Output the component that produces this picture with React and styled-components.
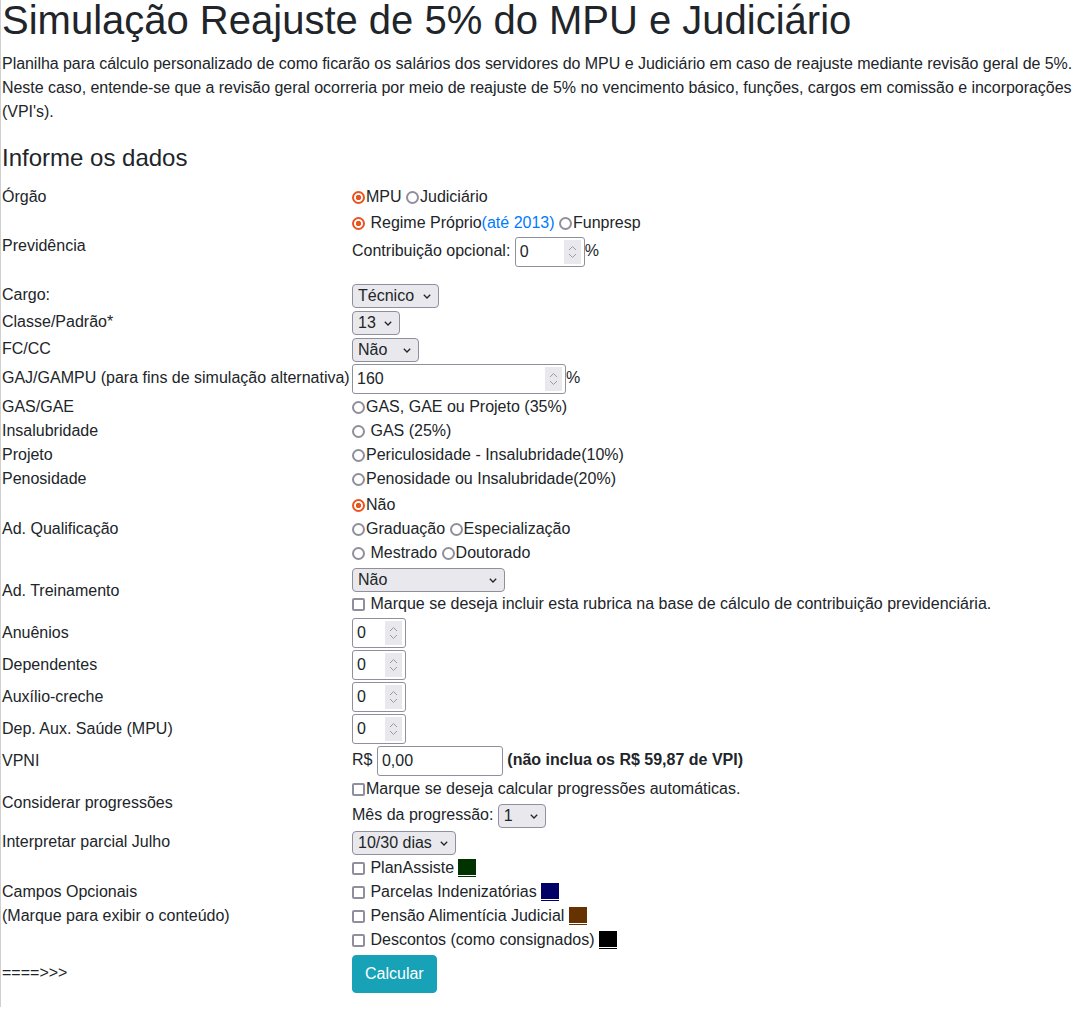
import React from 'react';
import styled, { createGlobalStyle } from 'styled-components';

const GlobalStyle = createGlobalStyle`
    *, *::before, *::after {
        box-sizing: border-box;
    }
    body {
        margin: 0;
        background: #fff;
    }
`;

const Page = styled.div`
    min-height: 100vh;
    border-left: 1px solid #d0d0d0;
    padding-left: 1px;
    font-family: 'Liberation Sans', Arial, sans-serif;
    font-size: 16px;
    line-height: 1.5;
    color: #212529;
`;

const Title = styled.h1`
    margin: -4px 0 8px;
    font-size: 40px;
    font-weight: 400;
    line-height: 48px;
    white-space: nowrap;
`;

const Intro = styled.p`
    margin: 0 -4px 20px 0;
    letter-spacing: -0.04px;
`;

const Subtitle = styled.h4`
    margin: 0 0 12px;
    font-size: 24px;
    font-weight: 400;
    line-height: 28.8px;
`;

const Row = styled.div`
    display: grid;
    grid-template-columns: 350px 1fr;
`;

const Label = styled.div`
    display: flex;
    align-items: center;
    padding-top: ${(p) => p.$pt || 0}px;
    white-space: nowrap;
    line-height: 24px;
`;

const Field = styled.div`
    padding-top: ${(p) => p.$pt || 0}px;
    padding-bottom: ${(p) => p.$pb || 0}px;
`;

const Line = styled.div`
    height: ${(p) => p.$h || 24}px;
    line-height: ${(p) => p.$h || 24}px;
    white-space: nowrap;
`;

const Radio = styled.input.attrs({ type: 'radio' })`
    appearance: none;
    width: 13px;
    height: 13px;
    margin: 0 1px 0 0;
    border: 2px solid #8f8f9d;
    border-radius: 50%;
    background: #fff;
    vertical-align: -2px;

    &:checked {
        border-color: #e95420;
        background: radial-gradient(circle, #e95420 0 2.4px, #fff 3px);
    }
`;

const Check = styled.input.attrs({ type: 'checkbox' })`
    appearance: none;
    width: 13px;
    height: 13px;
    margin: 0 1px 0 0;
    border: 2px solid #8f8f9d;
    border-radius: 2px;
    background: #fff;
    vertical-align: -2px;
`;

const Link = styled.a`
    color: #007bff;
    text-decoration: none;
`;

const SelectWrap = styled.span`
    position: relative;
    display: inline-block;
    width: ${(p) => p.$w}px;
    height: 24px;
    vertical-align: middle;
    line-height: normal;
`;

const Select = styled.select`
    appearance: none;
    width: 100%;
    height: 24px;
    margin: 0;
    padding: 0 0 0 5px;
    border: 1px solid #8f8f9d;
    border-radius: 4px;
    background: #e9e9ed;
    color: #212529;
    font: inherit;
    line-height: 22px;
`;

const Chevron = styled.svg`
    position: absolute;
    right: 8px;
    top: 10px;
    pointer-events: none;
`;

const FieldWrap = styled.span`
    position: relative;
    display: inline-block;
    width: ${(p) => p.$w}px;
    height: 30px;
    vertical-align: middle;
    line-height: normal;
`;

const TextInput = styled.input`
    width: 100%;
    height: 30px;
    margin: 0;
    padding: 0 ${(p) => (p.$spin ? 22 : 4)}px 0 4px;
    border: 1px solid #8f8f9d;
    border-radius: 3px;
    background: #fff;
    color: #212529;
    font: inherit;
`;

const Spinner = styled.span`
    position: absolute;
    top: 3px;
    right: 4px;
    bottom: 3px;
    width: 17px;
    display: flex;
    align-items: center;
    justify-content: center;
    background: #e9e9ed;
    pointer-events: none;
`;

const Swatch = styled.span`
    display: inline-block;
    width: 18px;
    height: 18px;
    vertical-align: -4px;
    background: linear-gradient(
        to bottom,
        ${(p) => p.$c} 0 16px,
        transparent 16px 17px,
        ${(p) => p.$c} 17px 18px
    );
`;

const Button = styled.button`
    padding: 6px 12px;
    border: 1px solid #17a2b8;
    border-radius: 4px;
    background: #17a2b8;
    color: #fff;
    font: inherit;
    line-height: 24px;
    cursor: pointer;
`;

const Dropdown = ({ w, value }) => (
    <SelectWrap $w={w}>
        <Select defaultValue={value}>
            <option>{value}</option>
        </Select>
        <Chevron width='8' height='5' viewBox='0 0 8 5'>
            <path d='M0.8 0.8L4 4L7.2 0.8' fill='none' stroke='#212529' strokeWidth='1.3' />
        </Chevron>
    </SelectWrap>
);

const NumberField = ({ w, value }) => (
    <FieldWrap $w={w}>
        <TextInput $spin defaultValue={value} />
        <Spinner>
            <svg width='9' height='16' viewBox='0 0 9 16'>
                <path d='M1 6L4.5 2.5L8 6M1 10L4.5 13.5L8 10' fill='none' stroke='#9a9aa5' strokeWidth='1' />
            </svg>
        </Spinner>
    </FieldWrap>
);

const App = () => {
    return (
        <Page>
            <GlobalStyle />
            <Title>Simulação Reajuste de 5% do MPU e Judiciário</Title>
            <Intro>
                Planilha para cálculo personalizado de como ficarão os salários dos servidores do MPU e Judiciário em caso de reajuste mediante revisão geral de 5%.
                <br />
                Neste caso, entende-se que a revisão geral ocorreria por meio de reajuste de 5% no vencimento básico, funções, cargos em comissão e incorporações (VPI's).
            </Intro>
            <Subtitle>Informe os dados</Subtitle>

            <Row>
                <Label>Órgão</Label>
                <Field>
                    <Line>
                        <Radio name='orgao' defaultChecked />MPU <Radio name='orgao' />Judiciário
                    </Line>
                </Field>
            </Row>

            <Row>
                <Label $pt={2}>Previdência</Label>
                <Field $pt={2} $pb={14}>
                    <Line>
                        <Radio name='prev' defaultChecked /> Regime Próprio<Link>(até 2013)</Link> <Radio name='prev' />Funpresp
                    </Line>
                    <Line $h={32}>
                        Contribuição opcional: <NumberField w={70} value='0' />%
                    </Line>
                </Field>
            </Row>

            <Row>
                <Label $pt={1}>Cargo:</Label>
                <Line $h={27}>
                    <Dropdown w={87} value='Técnico' />
                </Line>
            </Row>
            <Row>
                <Label $pt={1}>Classe/Padrão*</Label>
                <Line $h={27}>
                    <Dropdown w={48} value='13' />
                </Line>
            </Row>
            <Row>
                <Label $pt={1}>FC/CC</Label>
                <Line $h={27}>
                    <Dropdown w={67} value='Não' />
                </Line>
            </Row>
            <Row>
                <Label>GAJ/GAMPU (para fins de simulação alternativa)</Label>
                <Line $h={32}>
                    <NumberField w={214} value='160' />%
                </Line>
            </Row>

            <Row>
                <Label $pt={1}>GAS/GAE</Label>
                <Field $pt={1}>
                    <Line>
                        <Radio name='grat' />GAS, GAE ou Projeto (35%)
                    </Line>
                </Field>
            </Row>
            <Row>
                <Label>Insalubridade</Label>
                <Line>
                    <Radio name='grat' /> GAS (25%)
                </Line>
            </Row>
            <Row>
                <Label>Projeto</Label>
                <Line>
                    <Radio name='grat' />Periculosidade - Insalubridade(10%)
                </Line>
            </Row>
            <Row>
                <Label>Penosidade</Label>
                <Line>
                    <Radio name='grat' />Penosidade ou Insalubridade(20%)
                </Line>
            </Row>

            <Row>
                <Label $pt={2}>Ad. Qualificação</Label>
                <Field $pt={2}>
                    <Line>
                        <Radio name='aq' defaultChecked />Não
                    </Line>
                    <Line>
                        <Radio name='aq' />Graduação <Radio name='aq' />Especialização
                    </Line>
                    <Line>
                        <Radio name='aq' /> Mestrado <Radio name='aq' />Doutorado
                    </Line>
                </Field>
            </Row>

            <Row>
                <Label $pt={2}>Ad. Treinamento</Label>
                <Field>
                    <Line $h={27}>
                        <Dropdown w={153} value='Não' />
                    </Line>
                    <Line>
                        <Check /> Marque se deseja incluir esta rubrica na base de cálculo de contribuição previdenciária.
                    </Line>
                </Field>
            </Row>

            <Row>
                <Label $pt={2}>Anuênios</Label>
                <Line $h={32}>
                    <NumberField w={54} value='0' />
                </Line>
            </Row>
            <Row>
                <Label $pt={2}>Dependentes</Label>
                <Line $h={32}>
                    <NumberField w={54} value='0' />
                </Line>
            </Row>
            <Row>
                <Label $pt={2}>Auxílio-creche</Label>
                <Line $h={32}>
                    <NumberField w={54} value='0' />
                </Line>
            </Row>
            <Row>
                <Label $pt={2}>Dep. Aux. Saúde (MPU)</Label>
                <Line $h={32}>
                    <NumberField w={54} value='0' />
                </Line>
            </Row>

            <Row>
                <Label $pt={2}>VPNI</Label>
                <Line $h={32}>
                    R$ <FieldWrap $w={126}><TextInput defaultValue='0,00' /></FieldWrap> <b>(não inclua os R$ 59,87 de VPI)</b>
                </Line>
            </Row>

            <Row>
                <Label $pt={2}>Considerar progressões</Label>
                <Field $pt={1}>
                    <Line>
                        <Check />Marque se deseja calcular progressões automáticas.
                    </Line>
                    <Line $h={27}>
                        Mês da progressão: <Dropdown w={48} value='1' />
                    </Line>
                </Field>
            </Row>

            <Row>
                <Label $pt={1}>Interpretar parcial Julho</Label>
                <Line $h={27}>
                    <Dropdown w={104} value='10/30 dias' />
                </Line>
            </Row>

            <Row>
                <Label $pt={2}>
                    <span>
                        Campos Opcionais
                        <br />
                        (Marque para exibir o conteúdo)
                    </span>
                </Label>
                <Field $pt={1}>
                    <Line>
                        <Check /> PlanAssiste <Swatch $c='#003300' />
                    </Line>
                    <Line>
                        <Check /> Parcelas Indenizatórias <Swatch $c='#000066' />
                    </Line>
                    <Line>
                        <Check /> Pensão Alimentícia Judicial <Swatch $c='#663300' />
                    </Line>
                    <Line>
                        <Check /> Descontos (como consignados) <Swatch $c='#000000' />
                    </Line>
                </Field>
            </Row>

            <Row>
                <Label $pt={2}>====&gt;&gt;&gt;</Label>
                <Field $pt={3}>
                    <Button>Calcular</Button>
                </Field>
            </Row>
        </Page>
    );
};

export default App;
